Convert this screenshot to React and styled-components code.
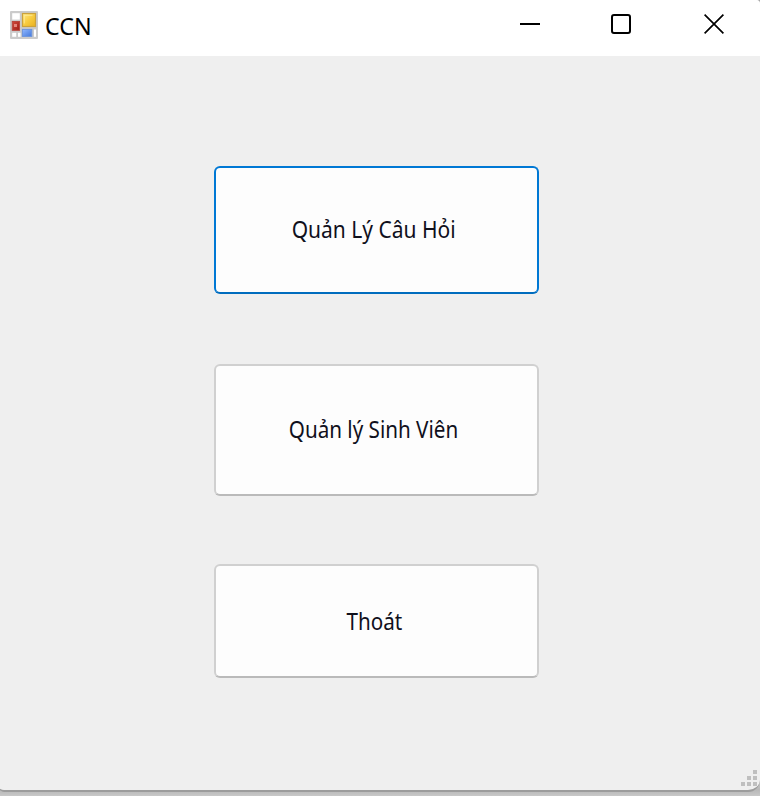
import React from "react";
import styled, { createGlobalStyle } from "styled-components";

const GlobalStyle = createGlobalStyle`
  * { box-sizing: border-box; }
  html, body { margin: 0; padding: 0; }
  body { background: #c6c6c6; overflow: hidden; }
`;

const Desktop = styled.div`
  width: 760px;
  height: 796px;
  background: linear-gradient(to bottom, #a8a8a8 0, #a8a8a8 4px, #e4e4e4 8px, #e4e4e4 760px, #b8b8b8 790px, #c8c8c8 796px);
  overflow: hidden;
`;

const Window = styled.main`
  display: flex;
  flex-direction: column;
  width: 761px;
  height: 792px;
  margin-left: -1px;
  background: #efefef;
  border-bottom: 2px solid #9c9c9c;
  border-radius: 0 4px 12px 5px;
  overflow: hidden;
  font-family: "Noto Sans", "Open Sans", sans-serif;
`;

const TitleBar = styled.header`
  display: flex;
  flex: 0 0 56px;
  align-items: flex-start;
  padding-left: 11px;
  background: #fff;
`;

const AppIcon = styled.svg`
  flex: none;
  width: 28px;
  height: 28px;
  margin-top: 11px;
`;

const Title = styled.h1`
  margin: 10px 0 0 7px;
  font-size: 23px;
  font-weight: 400;
  line-height: 33px;
  color: #000;
  white-space: nowrap;
  transform: scaleX(${(p) => p.$stretch});
  transform-origin: left;
`;

const Controls = styled.div`
  display: flex;
  margin-left: auto;
`;

const ControlButton = styled.button`
  display: flex;
  justify-content: center;
  width: ${(p) => p.$width}px;
  height: 56px;
  padding: 14px 0 0;
  border: 0;
  background: transparent;
`;

const Glyph = styled.svg`
  width: 20px;
  height: 20px;
  fill: none;
  stroke: #000;
  stroke-width: ${(p) => p.$weight || 2};
`;

const Body = styled.section`
  display: flex;
  flex: 1;
  flex-direction: column;
  align-items: flex-start;
  padding: 110px 0 0 215px;
`;

const MenuButton = styled.button`
  display: flex;
  flex: none;
  align-items: center;
  justify-content: center;
  width: 325px;
  height: ${(p) => p.$height}px;
  margin-bottom: ${(p) => p.$gap}px;
  padding: 0 5px ${(p) => p.$lift || 0}px 0;
  border: 2px solid ${(p) => (p.$focused ? "#0078d4" : "#d0d0d0")};
  border-bottom-color: ${(p) => (p.$focused ? "#006cbe" : "#bababa")};
  border-radius: 6px;
  background: #fdfdfd;
  color: #10101c;
  font: 400 24px/32px "Noto Sans", "Open Sans", sans-serif;
`;

const Label = styled.span`
  white-space: nowrap;
  transform: scaleX(${(p) => p.$stretch});
`;

const Footer = styled.footer`
  display: flex;
  justify-content: flex-end;
  margin-top: auto;
  width: 100%;
  padding: 0 3px 4px 0;
`;

const Grip = styled.div`
  display: grid;
  grid-template-columns: repeat(3, 4px);
  grid-template-rows: repeat(3, 4px);
  gap: 2px;
`;

const GripDot = styled.i`
  grid-column: ${(p) => p.$col};
  grid-row: ${(p) => p.$row};
  background: #bfbfbf;
`;

const gripDots = [[3, 1], [2, 2], [3, 2], [1, 3], [2, 3], [3, 3]];

const actions = [
  { label: "Quản Lý Câu Hỏi", height: 128, gap: 70, stretch: 0.875, lift: 2, focused: true },
  { label: "Quản lý Sinh Viên", height: 132, gap: 68, stretch: 0.86, lift: 2 },
  { label: "Thoát", height: 114, gap: 0, stretch: 0.86 },
];

function FormIcon() {
  return (
    <AppIcon viewBox="0 0 28 28" aria-hidden="true">
      <defs>
        <linearGradient id="gold" x1="0" y1="0" x2="1" y2="1">
          <stop offset="0" stopColor="#ffe988" />
          <stop offset="0.5" stopColor="#f8cc40" />
          <stop offset="1" stopColor="#e8b020" />
        </linearGradient>
        <linearGradient id="red" x1="0" y1="0" x2="1" y2="1">
          <stop offset="0" stopColor="#d04a3c" />
          <stop offset="1" stopColor="#a01c14" />
        </linearGradient>
        <linearGradient id="blue" x1="0" y1="0" x2="1" y2="1">
          <stop offset="0" stopColor="#90b8ff" />
          <stop offset="1" stopColor="#4478dc" />
        </linearGradient>
      </defs>
      <rect width="28" height="28" rx="1" fill="#cbcbcb" />
      <rect x="2.2" y="2.2" width="7.6" height="6.4" fill="#fff" />
      <rect x="2.2" y="21.8" width="4" height="4" fill="#fff" />
      <rect x="8" y="21.8" width="2.6" height="4" fill="#fff" />
      <rect x="24" y="18.5" width="2" height="7.3" fill="#fff" />
      <rect x="12.5" y="2.5" width="13" height="13" fill="url(#gold)" stroke="#cba23c" strokeWidth="1.2" />
      <path d="M14.3 12.5V4.3H22.5" fill="none" stroke="#fff2b0" opacity=".6" />
      <rect x="2.3" y="10.5" width="7.2" height="8.8" fill="url(#red)" stroke="#b8473e" />
      <rect x="4" y="13" width="3" height="3" fill="#ee9b90" opacity=".8" />
      <rect x="12.4" y="18.4" width="9.4" height="7" fill="url(#blue)" stroke="#6c94dc" />
    </AppIcon>
  );
}

export default function App() {
  return (
    <>
      <GlobalStyle />
      <Desktop>
        <Window>
          <TitleBar>
            <FormIcon />
            <Title $stretch={1.01}>CCN</Title>
            <Controls>
              <ControlButton $width={88} aria-label="Minimize">
                <Glyph viewBox="0 0 20 20"><path d="M0 10h20" /></Glyph>
              </ControlButton>
              <ControlButton $width={94} aria-label="Maximize">
                <Glyph viewBox="0 0 20 20"><rect x="1" y="1" width="18" height="18" rx="2" /></Glyph>
              </ControlButton>
              <ControlButton $width={92} aria-label="Close">
                <Glyph viewBox="0 0 20 20" $weight={1.7}><path d="M.6.6l18.8 18.8M19.4.6L.6 19.4" /></Glyph>
              </ControlButton>
            </Controls>
          </TitleBar>
          <Body>
            {actions.map((a) => (
              <MenuButton key={a.label} $height={a.height} $gap={a.gap} $lift={a.lift} $focused={a.focused}>
                <Label $stretch={a.stretch}>{a.label}</Label>
              </MenuButton>
            ))}
            <Footer>
              <Grip>
                {gripDots.map(([col, row]) => (
                  <GripDot key={`${col}-${row}`} $col={col} $row={row} />
                ))}
              </Grip>
            </Footer>
          </Body>
        </Window>
      </Desktop>
    </>
  );
}
